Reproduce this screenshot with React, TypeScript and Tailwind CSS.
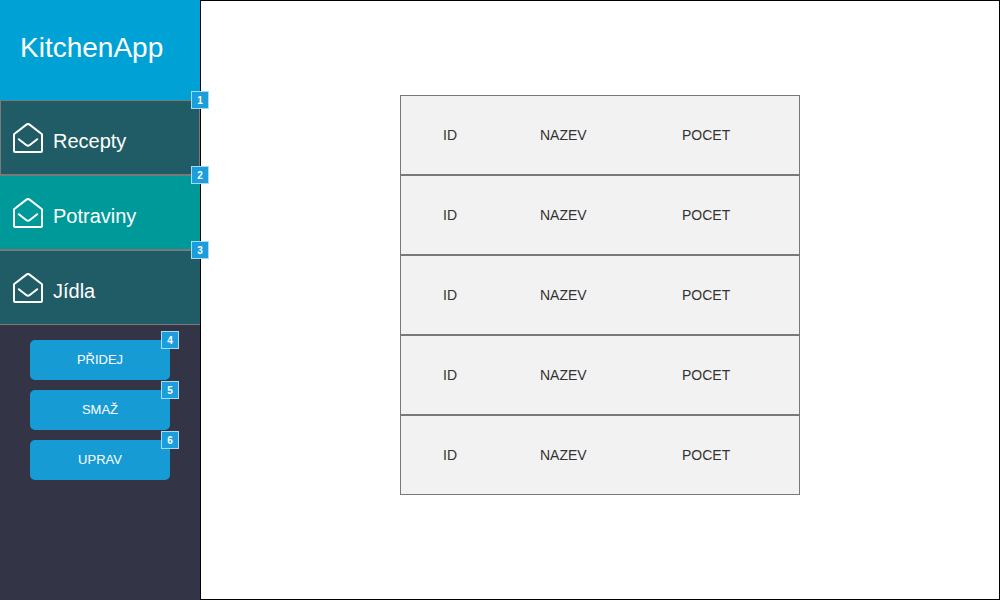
import React from "react";

const tabs = [
  { label: "Recepty", note: 1, look: "border pl-3 bg-[#205c66]" },
  { label: "Potraviny", note: 2, look: "border-y pl-[13px] bg-[#009999]" },
  { label: "Jídla", note: 3, look: "border-y pl-[13px] bg-[#205c66]" },
];

const actions = [
  { label: "PŘIDEJ", note: 4 },
  { label: "SMAŽ", note: 5 },
  { label: "UPRAV", note: 6 },
];

const rows = [1, 2, 3, 4, 5];

function Note({ value }: { value: number }) {
  return (
    <span className="pointer-events-none absolute -top-[9px] -right-[9px] z-10 block size-[18px] border border-[#a3dcf7] bg-[#1b9edb] pt-px text-center text-[10px] leading-4 font-bold text-white">
      {value}
    </span>
  );
}

function EnvelopeIcon() {
  return (
    <svg
      className="size-[30px] shrink-0"
      viewBox="0 0 30 30"
      fill="none"
      stroke="currentColor"
      strokeWidth="2"
      strokeLinecap="round"
      strokeLinejoin="round"
      aria-hidden="true"
    >
      <path d="M1 11.2 13.4 1.6Q15 .4 16.6 1.6L29 11.2V28Q29 29 28 29H2Q1 29 1 28Z" />
      <path d="M5.8 16.2 13.2 22Q15 23.4 16.8 22L24.2 16.2" />
    </svg>
  );
}

export default function App() {
  return (
    <div className="flex min-h-screen font-['Liberation_Sans',Arial,sans-serif]">
      <aside className="w-[200px] shrink-0 bg-[#333547] text-white">
        <header className="flex h-[100px] items-center bg-[#00a2d6] px-5 pb-1">
          <h1 className="text-[28px] leading-8">KitchenApp</h1>
        </header>
        <nav>
          {tabs.map((tab) => (
            <div key={tab.label} className="relative">
              <a
                href={"#" + tab.label}
                className={"flex h-[75px] items-center gap-2.5 border-[#797979] " + tab.look}
              >
                <EnvelopeIcon />
                <span className="pt-1.5 text-[20px] leading-[22px]">{tab.label}</span>
              </a>
              <Note value={tab.note} />
            </div>
          ))}
        </nav>
        <div className="flex flex-col gap-2.5 px-[30px] pt-[15px]">
          {actions.map((action) => (
            <div key={action.label} className="relative">
              <button
                type="button"
                className="block h-10 w-full cursor-pointer rounded-[5px] bg-[#169bd5] text-[13px] leading-4"
              >
                {action.label}
              </button>
              <Note value={action.note} />
            </div>
          ))}
        </div>
      </aside>
      <main className="grow border border-black bg-white pt-[94px]">
        <table className="mx-auto w-[400px] max-w-full table-fixed border-separate border-spacing-0 bg-[#f2f2f2] text-left text-[14px] leading-4 text-[#333333]">
          <colgroup>
            <col className="w-[140px]" />
            <col className="w-[142px]" />
            <col />
          </colgroup>
          <tbody>
            {rows.map((row) => (
              <tr key={row} className="h-20">
                <td className="border-y border-l border-[#797979] pl-[42px]">ID</td>
                <td className="border-y border-[#797979]">NAZEV</td>
                <td className="border-y border-r border-[#797979]">POCET</td>
              </tr>
            ))}
          </tbody>
        </table>
      </main>
    </div>
  );
}
